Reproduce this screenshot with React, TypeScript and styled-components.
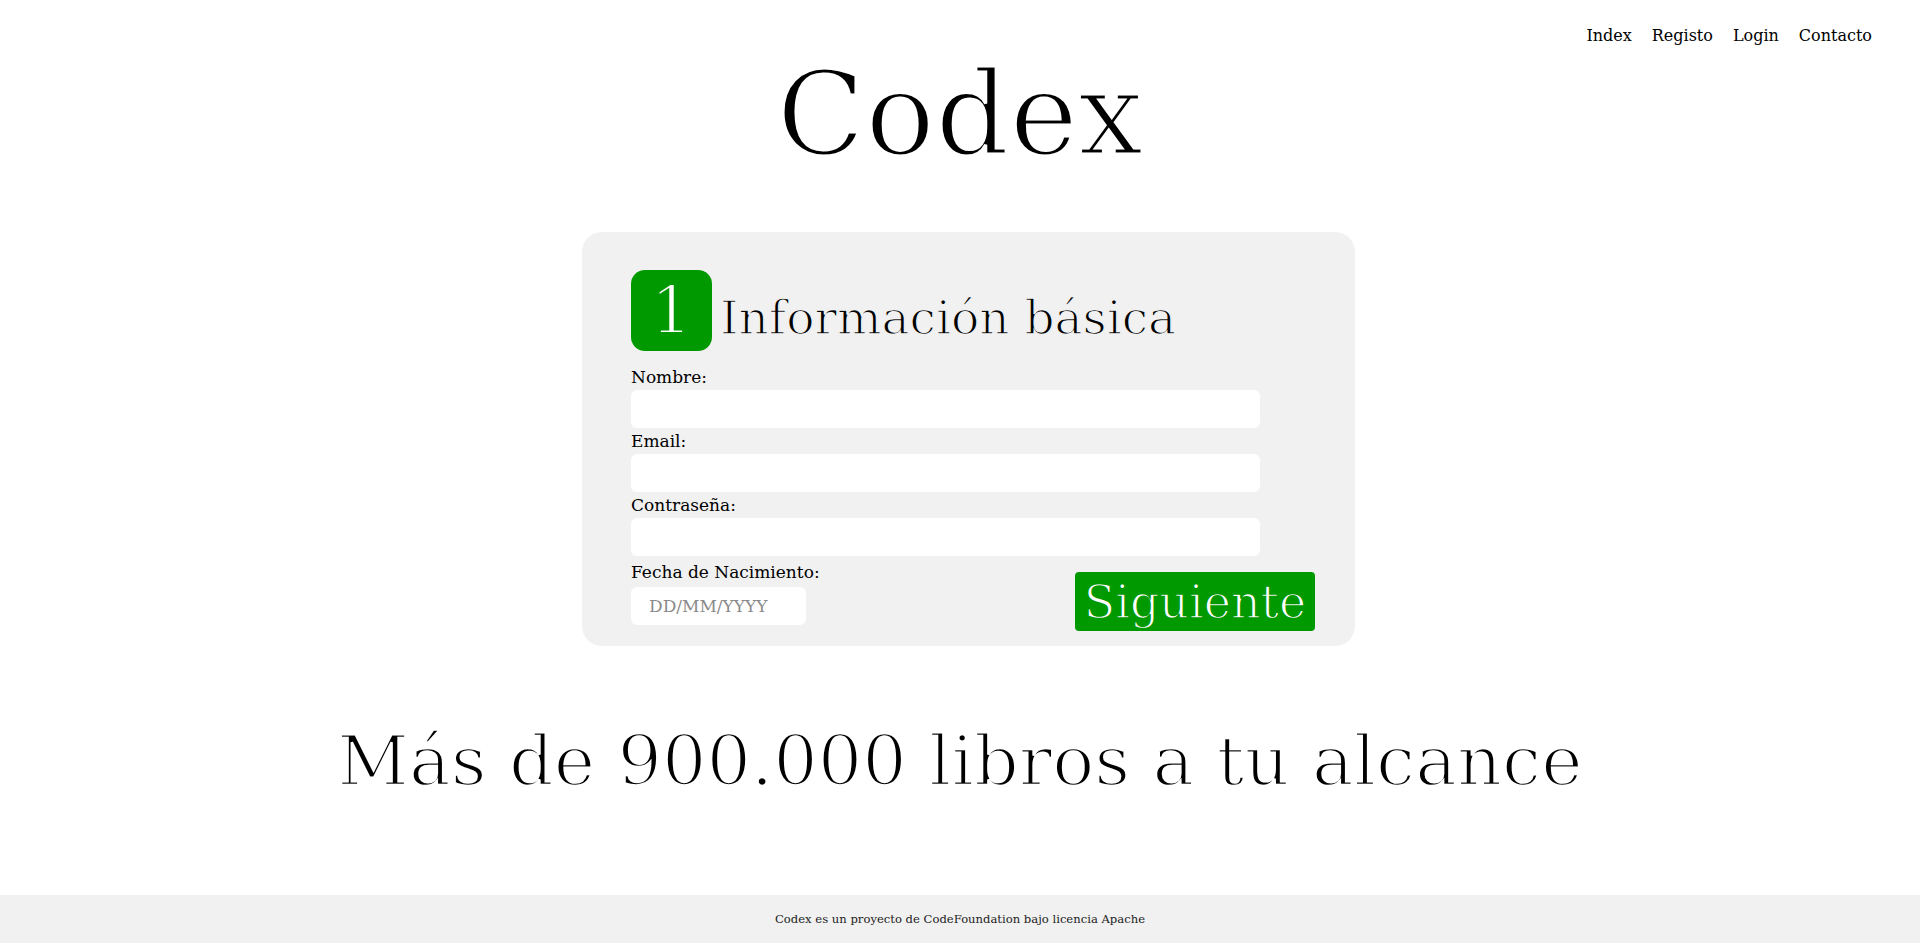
import React from "react";
import styled, { createGlobalStyle } from "styled-components";

const GlobalStyle = createGlobalStyle`
  html, body {
    margin: 0;
    padding: 0;
    background: #ffffff;
  }
  body {
    font-family: "DejaVu Serif", "Liberation Serif", serif;
    color: #000;
  }
  * { box-sizing: border-box; }
`;

const Page = styled.div`
  min-height: 100vh;
  display: flex;
  flex-direction: column;
`;

const Header = styled.header`
  display: flex;
  justify-content: flex-end;
  padding: 25px 48px 0 0;
`;

const Nav = styled.nav`
  display: flex;
  gap: 20px;
`;

const NavLink = styled.a`
  font-size: 16px;
  line-height: 22px;
  color: #000;
  text-decoration: none;
`;

const Title = styled.h1`
  margin: 0;
  text-align: center;
  font-weight: normal;
  font-size: 116px;
  line-height: 134px;
  -webkit-text-stroke: 3px #fff;
`;

const CardRow = styled.div`
  display: flex;
  justify-content: center;
  padding: 51px 0 0 17px;
`;

const Card = styled.form`
  width: 773px;
  background: #f1f1f1;
  border-radius: 20px;
  padding: 38px 40px 15px 49px;
`;

const StepHeader = styled.div`
  display: flex;
  align-items: flex-end;
  gap: 8px;
`;

const StepBadge = styled.div`
  width: 81px;
  height: 81px;
  border-radius: 14px;
  background: #009900;
  color: #fff;
  display: flex;
  align-items: center;
  justify-content: center;
  font-size: 66px;
  line-height: 1;
  -webkit-text-stroke: 2px #009900;
`;

const StepTitle = styled.h2`
  margin: 0 0 5px 0;
  font-weight: normal;
  font-size: 47px;
  line-height: 56px;
  -webkit-text-stroke: 1.4px #f1f1f1;
`;

const Label = styled.label`
  display: block;
  font-size: 17px;
  line-height: 22px;
`;

const Field = styled.div<{ $first?: boolean }>`
  margin-top: ${(p) => (p.$first ? "15px" : "2px")};
`;

const Input = styled.input`
  display: block;
  width: 629px;
  height: 38px;
  margin-top: 2px;
  border: none;
  border-radius: 6px;
  background: #fff;
  font-family: inherit;
  font-size: 17px;
  padding: 0 16px;
  outline: none;
`;

const BottomRow = styled.div`
  display: flex;
  justify-content: space-between;
  align-items: flex-start;
  margin-top: 5px;
`;

const DateBlock = styled.div`
  display: flex;
  flex-direction: column;
`;

const DateInput = styled(Input)`
  width: 175px;
  margin-top: 4px;
  padding: 0 18px;
  &::placeholder {
    color: #8a8a8a;
  }
`;

const NextButton = styled.button`
  width: 240px;
  height: 59px;
  margin-top: 11px;
  background: #009900;
  color: #fff;
  border: none;
  border-radius: 4px;
  font-family: inherit;
  font-size: 46px;
  line-height: 1;
  padding: 0;
  cursor: pointer;
  -webkit-text-stroke: 1.4px #009900;
`;

const Tagline = styled.h2`
  margin: 70px 0 0 0;
  text-align: center;
  font-weight: normal;
  font-size: 70px;
  line-height: 90px;
  -webkit-text-stroke: 2.4px #fff;
`;

const Footer = styled.footer`
  margin-top: auto;
  height: 48px;
  background: #f1f1f1;
  display: flex;
  align-items: center;
  justify-content: center;
  font-size: 11.6px;
  color: #222;
`;

export default function App() {
  return (
    <>
      <GlobalStyle />
      <Page>
        <Header>
          <Nav>
            <NavLink href="#">Index</NavLink>
            <NavLink href="#">Registo</NavLink>
            <NavLink href="#">Login</NavLink>
            <NavLink href="#">Contacto</NavLink>
          </Nav>
        </Header>
        <Title>Codex</Title>
        <CardRow>
          <Card onSubmit={(e) => e.preventDefault()}>
            <StepHeader>
              <StepBadge>1</StepBadge>
              <StepTitle>Información básica</StepTitle>
            </StepHeader>
            <Field $first>
              <Label htmlFor="nombre">Nombre:</Label>
              <Input id="nombre" type="text" />
            </Field>
            <Field>
              <Label htmlFor="email">Email:</Label>
              <Input id="email" type="email" />
            </Field>
            <Field>
              <Label htmlFor="pass">Contraseña:</Label>
              <Input id="pass" type="password" />
            </Field>
            <BottomRow>
              <DateBlock>
                <Label htmlFor="fecha">Fecha de Nacimiento:</Label>
                <DateInput id="fecha" type="text" placeholder="DD/MM/YYYY" />
              </DateBlock>
              <NextButton type="submit">Siguiente</NextButton>
            </BottomRow>
          </Card>
        </CardRow>
        <Tagline>Más de 900.000 libros a tu alcance</Tagline>
        <Footer>Codex es un proyecto de CodeFoundation bajo licencia Apache</Footer>
      </Page>
    </>
  );
}
